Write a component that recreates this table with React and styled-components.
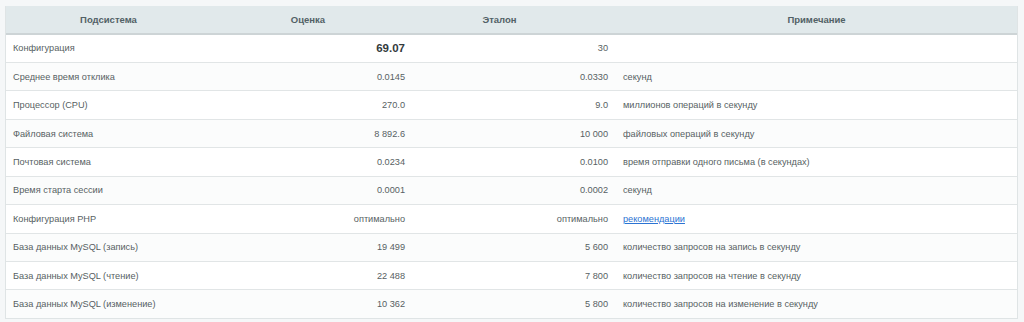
import React from "react";
import styled, { createGlobalStyle } from "styled-components";

const Global = createGlobalStyle`
  html, body { margin: 0; padding: 0; background: #f5f7f8; }
  body { font-family: "Liberation Sans", Arial, sans-serif; }
`;

const Page = styled.div`
  padding: 6px 6px 0 5px;
`;

const Table = styled.div`
  width: 1013px;
  border: 1px solid #dfe4e5;
  border-top: none;
  background: #ffffff;
  box-sizing: border-box;
`;

const cols = "205px 202px 203px 1fr";

const HeadRow = styled.div`
  display: grid;
  grid-template-columns: ${cols};
  height: 26.5px;
  background: #e1e9eb;
  border-bottom: 2px solid #cdd4d6;
`;

const HeadCell = styled.div`
  display: flex;
  align-items: center;
  justify-content: center;
  padding-right: ${(p) => p.$shift || 0}px;
  font-size: 9.5px;
  font-weight: bold;
  color: #526166;
`;

const Row = styled.div`
  display: grid;
  grid-template-columns: ${cols};
  height: 27.45px;
  border-bottom: 1px solid #e1e5e6;
  background: ${(p) => (p.$alt ? "#fbfcfc" : "#ffffff")};
  &:last-child { border-bottom: none; }
`;

const Cell = styled.div`
  display: flex;
  align-items: center;
  justify-content: ${(p) => (p.$right ? "flex-end" : "flex-start")};
  padding: ${(p) => (p.$right ? "0 8px 0 0" : "0 0 0 7px")};
  font-size: 9.2px;
  color: #575f63;
  white-space: nowrap;
  font-weight: ${(p) => (p.$bold ? "bold" : "normal")};
  ${(p) => p.$bold && "color: #333a3d; font-size: 11.5px;"}
`;

const Link = styled.a`
  color: #2b73d3;
  text-decoration: underline;
  cursor: pointer;
`;

const rows = [
  ["Конфигурация", "69.07", "30", "", true],
  ["Среднее время отклика", "0.0145", "0.0330", "секунд"],
  ["Процессор (CPU)", "270.0", "9.0", "миллионов операций в секунду"],
  ["Файловая система", "8 892.6", "10 000", "файловых операций в секунду"],
  ["Почтовая система", "0.0234", "0.0100", "время отправки одного письма (в секундах)"],
  ["Время старта сессии", "0.0001", "0.0002", "секунд"],
  ["Конфигурация PHP", "оптимально", "оптимально", "link"],
  ["База данных MySQL (запись)", "19 499", "5 600", "количество запросов на запись в секунду"],
  ["База данных MySQL (чтение)", "22 488", "7 800", "количество запросов на чтение в секунду"],
  ["База данных MySQL (изменение)", "10 362", "5 800", "количество запросов на изменение в секунду"],
];

export default function App() {
  return (
    <Page>
      <Global />
      <Table>
        <HeadRow>
          <HeadCell>Подсистема</HeadCell>
          <HeadCell $shift={8}>Оценка</HeadCell>
          <HeadCell $shift={30}>Эталон</HeadCell>
          <HeadCell>Примечание</HeadCell>
        </HeadRow>
        {rows.map(([name, score, ref, note, bold], i) => (
          <Row key={i} $alt={i % 2 === 1}>
            <Cell>{name}</Cell>
            <Cell $right $bold={bold}>{score}</Cell>
            <Cell $right>{ref}</Cell>
            <Cell>{note === "link" ? <Link>рекомендации</Link> : note}</Cell>
          </Row>
        ))}
      </Table>
    </Page>
  );
}
